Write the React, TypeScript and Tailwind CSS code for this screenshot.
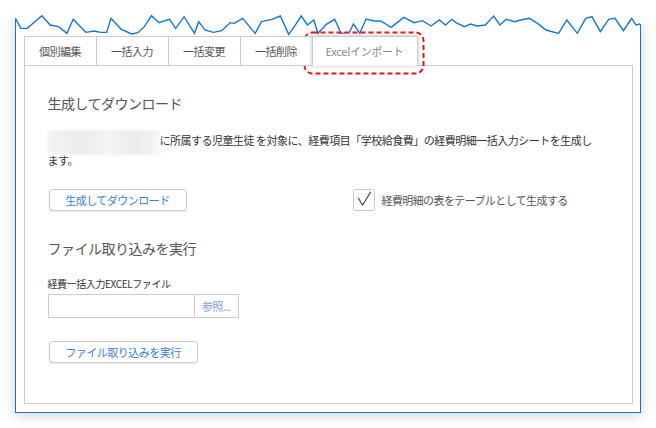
import React from 'react'

const tabs = ['個別編集', '一括入力', '一括変更', '一括削除']

// torn top edge of the screenshot frame, traced in a 1568x240 box
const jag =
  '37,55 50,85 65,85 100,47 120,75 140,80 160,100 175,58 205,97 225,93 240,97 255,97 265,55 290,88 315,102 330,98 345,80 362,47 380,68 405,58 420,85 440,50 465,100 475,65 490,90 510,97 530,92 550,68 560,70 580,55 610,100 625,65 650,58 670,48 690,103 705,77 720,48 735,75 750,60 760,100 780,73 800,58 815,100 835,97 845,72 860,100 875,57 895,63 910,63 935,82 965,52 990,68 1010,62 1030,78 1050,60 1065,75 1080,58 1090,68 1110,80 1125,72 1140,78 1160,75 1180,48 1195,75 1210,58 1230,65 1245,60 1265,55 1285,70 1305,90 1335,100 1355,60 1380,100 1400,55 1415,50 1435,95 1455,58 1470,55 1490,92 1510,55 1520,75 1530,72'

const font = "font-['Noto_Sans_CJK_JP','Noto_Sans',sans-serif]"

export default function App() {
  return (
    <div className={`relative w-[656px] h-[428px] bg-white pt-[18px] pl-[15px] ${font}`}>
      {/* Frame */}
      <div className="w-[626px] h-[395px] bg-white border-x-[1.5px] border-b-[1.5px] border-[#1677d2] shadow-[0_2px_12px_rgba(0,0,0,0.18)] pt-[18px] px-[7.5px]">
        {/* Tabs */}
        <div className="relative z-10 flex -mb-px">
          {tabs.map((t) => (
            <div
              key={t}
              className="w-[72px] h-[30px] flex items-center justify-center border-t border-l border-b border-[#ccc] bg-white text-[11px] tracking-[-0.5px] text-[#555]"
            >
              {t}
            </div>
          ))}
          <div className="w-[106px] h-[30px] flex items-center justify-center border-t border-x border-[#ccc] bg-white text-[11px] tracking-[-0.3px] text-[#888] shadow-[-1px_0_3px_rgba(0,0,0,0.15),1px_0_3px_rgba(0,0,0,0.12)]">
            Excelインポート
          </div>
        </div>

        {/* Panel */}
        <div className="h-[339px] border border-[#ccc] pl-[23px] pr-[23px] pt-[27px]">
          <h2 className="text-[14px] leading-[20px] tracking-[-0.5px] text-[#555]">生成してダウンロード</h2>

          <p className="mt-[18px] w-[552px] text-[11px] leading-[18.5px] tracking-[-0.5px] text-[#333]">
            {/* masked school name */}
            <span className="inline-block align-middle w-[112px] h-[25px] -my-[4px] bg-[linear-gradient(90deg,#f3f3f3,#ececec_30%,#f4f4f4_55%,#ebebeb_80%,#f6f6f6)] blur-[1.5px]" />
            に所属する児童生徒 を対象に、経費項目「学校給食費」の経費明細一括入力シートを生成します。
          </p>

          <div className="mt-[20px] flex items-center">
            <button className="ml-px w-[138px] h-[22px] border border-[#ccc] rounded-[3px] bg-white text-[11px] tracking-[-0.5px] text-[#3b7dd8] shadow-[0_1px_1px_rgba(0,0,0,0.08)]">
              生成してダウンロード
            </button>
            <label className="ml-[166px] flex items-center gap-[7px] text-[11px] tracking-[-0.6px] text-[#555]">
              <span className="w-[22px] h-[22px] border border-[#ccc] rounded-[2px] bg-white flex items-center justify-center">
                <svg width="22" height="22" viewBox="0 0 22 22">
                  <polyline points="4.5,8.5 9.5,16.5 18.5,2" fill="none" stroke="#3a3a3a" strokeWidth="1.2" />
                </svg>
              </span>
              経費明細の表をテーブルとして生成する
            </label>
          </div>

          <h2 className="mt-[27px] text-[14px] leading-[20px] tracking-[-0.5px] text-[#555]">ファイル取り込みを実行</h2>

          <div className="mt-[19px] text-[10px] leading-[14px] tracking-[-0.4px] text-[#333]">経費一括入力EXCELファイル</div>
          <div className="mt-[3px] flex">
            <div className="w-[147px] h-[24px] border border-[#ccc] bg-white" />
            <button className="w-[44px] h-[24px] border border-l-0 border-[#ccc] bg-white text-[11px] tracking-[-0.5px] text-[#7d9fd3]">
              参照...
            </button>
          </div>

          <button className="mt-[23px] ml-px w-[149px] h-[22px] border border-[#ccc] rounded-[3px] bg-white text-[11px] tracking-[-0.5px] text-[#3b7dd8] shadow-[0_1px_1px_rgba(0,0,0,0.08)]">
            ファイル取り込みを実行
          </button>
        </div>
      </div>

      {/* torn edge */}
      <svg
        className="absolute left-0 top-0 pointer-events-none"
        width="656"
        height="80"
        viewBox="0 0 1568 240"
        preserveAspectRatio="none"
      >
        <polygon points={`30,0 30,55 ${jag} 1545,72 1545,0`} fill="#fff" stroke="none" />
        <polyline points={jag} fill="none" stroke="#1677d2" strokeWidth="1.4" vectorEffect="non-scaling-stroke" />
      </svg>

      {/* annotation around active tab */}
      <svg className="absolute left-[303px] top-[31px] pointer-events-none" width="122" height="44">
        <rect x="1.5" y="1.5" width="119" height="41" rx="8" fill="none" stroke="#e8131b" strokeWidth="2" strokeDasharray="5 3" />
      </svg>
    </div>
  )
}
